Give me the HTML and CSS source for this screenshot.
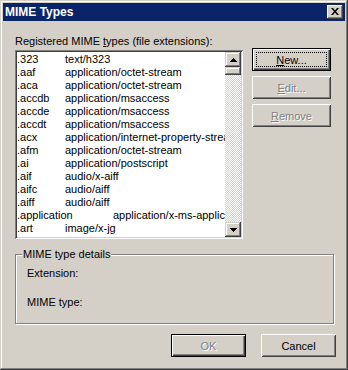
FILE: index.html
```html
<!DOCTYPE html>
<html lang="en">
<head>
  <meta charset="UTF-8">
  <title>MIME Types</title>
  <link rel="stylesheet" href="styles.css">
</head>
<body>
  <div class="window">
    <div class="titlebar">
      <span class="title">MIME Types</span>
      <button class="close-btn" aria-label="Close">
        <svg width="8" height="7" viewBox="0 0 8 7"><path d="M0 0H2L4 2.5L6 0H8L5 3.5L8 7H6L4 4.5L2 7H0L3 3.5Z" fill="#000"/></svg>
      </button>
    </div>

    <div class="content">
      <div class="top">
        <div class="list-col">
          <div class="label">Registered MIME <u>t</u>ypes (file extensions):</div>
          <div class="listbox">
            <div class="rows">
              <div class="row"><span class="ext">.323</span>text/h323</div>
              <div class="row"><span class="ext">.aaf</span>application/octet-stream</div>
              <div class="row"><span class="ext">.aca</span>application/octet-stream</div>
              <div class="row"><span class="ext">.accdb</span>application/msaccess</div>
              <div class="row"><span class="ext">.accde</span>application/msaccess</div>
              <div class="row"><span class="ext">.accdt</span>application/msaccess</div>
              <div class="row"><span class="ext">.acx</span>application/internet-property-stream</div>
              <div class="row"><span class="ext">.afm</span>application/octet-stream</div>
              <div class="row"><span class="ext">.ai</span>application/postscript</div>
              <div class="row"><span class="ext">.aif</span>audio/x-aiff</div>
              <div class="row"><span class="ext">.aifc</span>audio/aiff</div>
              <div class="row"><span class="ext">.aiff</span>audio/aiff</div>
              <div class="row"><span class="ext wide">.application</span>application/x-ms-application</div>
              <div class="row"><span class="ext">.art</span>image/x-jg</div>
              <div class="row"><span class="ext">.asd</span>application/octet-stream</div>
            </div>
            <div class="scrollbar">
              <div class="sb-btn">
                <svg width="7" height="4" viewBox="0 0 7 4"><path d="M3 0h1v1h1v1h1v1h1v1H0V3h1V2h1V1h1z" fill="#000"/></svg>
              </div>
              <div class="sb-thumb"></div>
              <div class="sb-track"></div>
              <div class="sb-btn">
                <svg width="7" height="4" viewBox="0 0 7 4"><path d="M0 0h7v1H6v1H5v1H4v1H3V3H2V2H1V1H0z" fill="#000"/></svg>
              </div>
            </div>
          </div>
        </div>

        <div class="side-buttons">
          <button class="btn default focus"><u>N</u>ew...</button>
          <button class="btn" disabled><u>E</u>dit...</button>
          <button class="btn" disabled><u>R</u>emove</button>
        </div>
      </div>

      <div class="group">
        <span class="group-title">MIME type details</span>
        <div class="field">Extension:</div>
        <div class="field">MIME type:</div>
      </div>

      <div class="footer">
        <button class="btn default" disabled>OK</button>
        <button class="btn">Cancel</button>
      </div>
    </div>
  </div>
</body>
</html>
```

FILE: styles.css
```css
body {
  margin: 0;
  background: #d4d0c8;
  font-family: "Liberation Sans", Arial, sans-serif;
  font-size: 11px;
  color: #000;
}
.window {
  width: 348px;
  height: 370px;
  box-sizing: border-box;
  padding: 3px;
  background: #d4d0c8;
  box-shadow: inset -1px -1px #404040, inset 1px 1px #d4d0c8, inset -2px -2px #808080, inset 2px 2px #fff;
  display: flex;
  flex-direction: column;
}
.titlebar {
  height: 18px;
  background: #0a246a;
  color: #fff;
  font-weight: bold;
  font-size: 12px;
  display: flex;
  align-items: center;
  justify-content: space-between;
  padding: 0 2px 0 2px;
}
.title {
  line-height: 18px;
}
.close-btn {
  width: 16px;
  height: 14px;
  padding: 0 1px 1px 0;
  border: 0;
  background: #d4d0c8;
  box-shadow: inset -1px -1px #404040, inset 1px 1px #fff, inset -2px -2px #808080, inset 2px 2px #d4d0c8;
  display: flex;
  align-items: center;
  justify-content: center;
}
.close-btn svg {
  display: block;
}
.content {
  flex: 1;
  padding: 14px 9px 0 12px;
  display: flex;
  flex-direction: column;
}
.top {
  display: flex;
}
.list-col {
  width: 228px;
}
.label {
  line-height: 13px;
  margin-bottom: 2px;
}
.listbox {
  height: 189px;
  box-sizing: border-box;
  padding: 2px;
  background: #fff;
  box-shadow: inset 1px 1px #808080, inset -1px -1px #fff, inset 2px 2px #404040, inset -2px -2px #d4d0c8;
  display: flex;
}
.rows {
  flex: 1;
  overflow: hidden;
  padding-top: 1px;
}
.row {
  white-space: nowrap;
  line-height: 13px;
}
.ext {
  display: inline-block;
  width: 48px;
}
.ext.wide {
  width: 96px;
}
.scrollbar {
  width: 16px;
  display: flex;
  flex-direction: column;
}
.sb-btn,
.sb-thumb {
  background: #d4d0c8;
  box-shadow: inset -1px -1px #404040, inset 1px 1px #d4d0c8, inset -2px -2px #808080, inset 2px 2px #fff;
}
.sb-btn {
  height: 15px;
  display: flex;
  align-items: center;
  justify-content: center;
}
.sb-btn svg {
  display: block;
}
.sb-thumb {
  height: 8px;
}
.sb-track {
  flex: 1;
  background-color: #fff;
  background-image: conic-gradient(#d4d0c8 25%, #fff 0 50%, #d4d0c8 0 75%, #fff 0);
  background-size: 2px 2px;
}
.side-buttons {
  display: flex;
  flex-direction: column;
  gap: 5px;
  margin: 13px 0 0 9px;
}
.side-buttons .btn {
  width: 79px;
}
.btn {
  position: relative;
  width: 75px;
  height: 23px;
  padding: 0;
  border: 0;
  font: inherit;
  color: #000;
  background: #d4d0c8;
  box-shadow: inset 1px 1px #fff, inset -1px -1px #404040, inset 2px 2px #d4d0c8, inset -2px -2px #808080;
}
.btn.default {
  box-shadow: inset 0 0 0 1px #000, inset 2px 2px #fff, inset -2px -2px #404040, inset -3px -3px #808080;
}
.btn.focus::after {
  content: "";
  position: absolute;
  inset: 4px;
  border: 1px dotted #000;
}
.btn:disabled {
  color: #808080;
  text-shadow: 1px 1px 0 #fff;
}
.group {
  position: relative;
  margin: 15px 2px 0 0;
  height: 70px;
  box-sizing: border-box;
  border: 1px solid #808080;
  box-shadow: inset 1px 1px #fff, 1px 1px #fff;
  padding: 12px 0 0 11px;
}
.group-title {
  position: absolute;
  top: -7px;
  left: 6px;
  padding: 0 1px;
  line-height: 13px;
  background: #d4d0c8;
}
.field {
  line-height: 13px;
}
.field + .field {
  margin-top: 16px;
}
.footer {
  display: flex;
  justify-content: flex-end;
  gap: 15px;
  margin-top: 10px;
}
```
